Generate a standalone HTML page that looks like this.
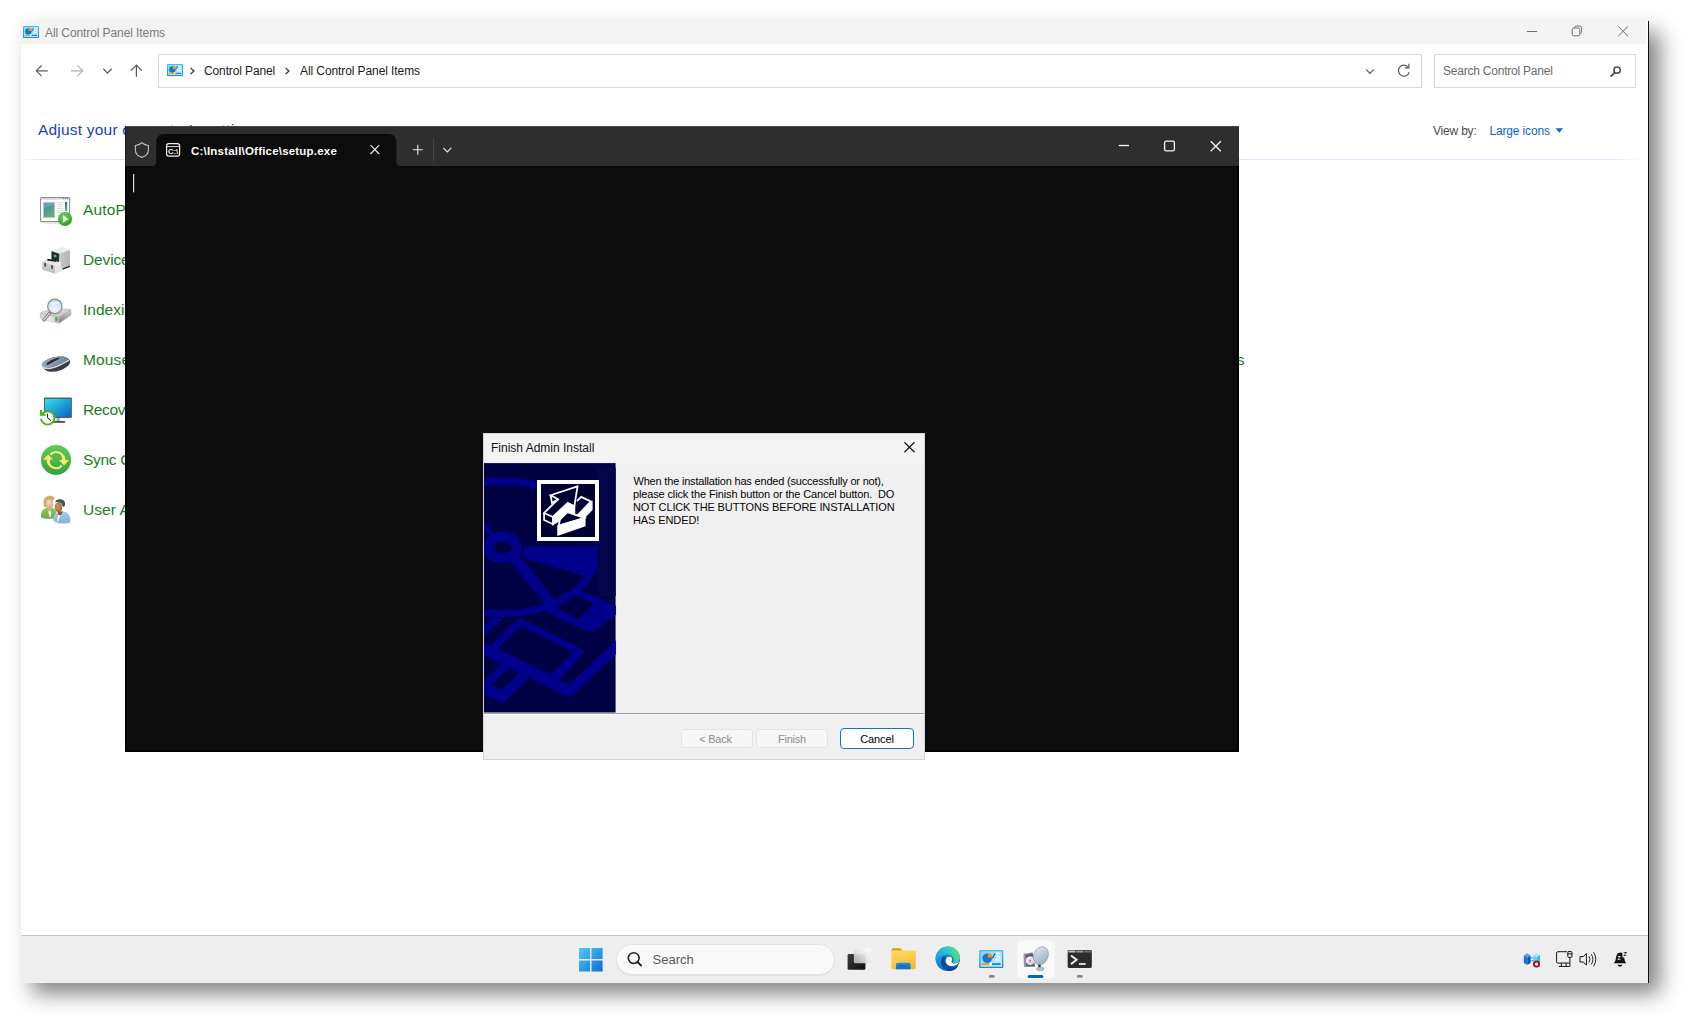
<!DOCTYPE html>
<html lang="en">
<head>
<meta charset="utf-8">
<title>All Control Panel Items</title>
<style>
*{box-sizing:border-box;margin:0;padding:0}
html,body{width:1691px;height:1025px;overflow:hidden;background:#fff}
body{position:relative;font-family:"Liberation Sans",sans-serif;color:#000}
.abs{position:absolute}
svg{position:absolute;overflow:visible}
.t{position:absolute;white-space:nowrap;line-height:1}
#win{position:absolute;left:21px;top:21px;width:1628px;height:962px;background:#fff;box-shadow:10.5px 11px 20px rgba(0,0,0,.48)}
#rline{position:absolute;left:1648px;top:21px;width:1px;height:962px;background:#111;z-index:50}
#cp-title{left:21px;top:21px;width:1625px;height:23px;background:#f3f3f3}
.box{position:absolute;border:1px solid #d9d9d9;background:#fff}
.cpi{color:#1b7d1b;font-size:15.5px;letter-spacing:-0.2px}
#term{left:125px;top:126px;width:1114px;height:626px;background:#0c0c0c;box-shadow:inset 2px 0 0 #000,inset -2px 0 0 #000,inset 0 -2px 0 #000}
#term-bar{left:0;top:0;width:1114px;height:40px;background:#2e2e2e;border-top:1px solid #454545}
#tab{left:32px;top:8px;width:240px;height:32px;background:#0c0c0c;border-radius:8px 8px 0 0}
#dlg{left:483px;top:433px;width:442px;height:327px;background:#f0f0f0;box-shadow:0 0 0 1px rgba(160,160,160,.0)}
#dlg-title{left:0;top:0;width:442px;height:30px;background:#f3f3f3}
.btn{position:absolute;height:19px;border:1px solid #e3e3e3;border-radius:3px;background:#f6f6f6;font-size:11px;text-align:center;line-height:19px;color:#8c8c8c}
#taskbar{left:21px;top:935px;width:1627px;height:48px;background:#eeeeee;border-top:1px solid #c4c4c4}
</style>
</head>
<body>
<div id="win"></div>
<div id="rline"></div>
<!-- ===== Control panel window chrome ===== -->
<div class="abs" id="cp-title"></div>
<svg style="left:23px;top:26px;width:16px;height:12px" viewBox="0 0 160 120">
  <defs><linearGradient id="cpf" x1="0" y1="0" x2="0" y2="1"><stop offset="0" stop-color="#3cc4f8"/><stop offset="1" stop-color="#1b86e4"/></linearGradient>
  <linearGradient id="cpi" x1="0" y1="0" x2="1" y2="1"><stop offset="0" stop-color="#8fd0f6"/><stop offset="1" stop-color="#cfeafb"/></linearGradient></defs>
  <rect x="0" y="0" width="160" height="120" rx="8" fill="url(#cpf)"/>
  <rect x="10" y="10" width="140" height="100" fill="url(#cpi)"/>
  <circle cx="53" cy="55" r="32" fill="#0b79da"/>
  <path d="M57,50 L57,18 A32,32 0 0 1 89,50 Z" fill="#ff9500"/>
  <path d="M86,52 C100,52 92,26 108,24" stroke="#0b4fa8" stroke-width="9" fill="none"/>
  <rect x="110" y="18" width="28" height="10" fill="#fff"/><rect x="114" y="40" width="26" height="10" fill="#fff"/><rect x="106" y="60" width="28" height="10" fill="#fff"/>
  <rect x="18" y="88" width="52" height="11" fill="#ff9500"/><rect x="70" y="86" width="14" height="15" fill="#fff"/><rect x="84" y="88" width="58" height="11" fill="#0b79da"/>
</svg>
<div class="t" style="left:45px;top:27px;font-size:12px;letter-spacing:-0.09px;color:#7b7b7b" id="cpt">All Control Panel Items</div>
<svg style="left:0;top:0;width:1691px;height:120px" viewBox="0 0 1691 120" fill="none" stroke-linecap="butt">
  <!-- caption buttons -->
  <path d="M1527,31.5 H1537" stroke="#6e6e6e" stroke-width="1"/>
  <path d="M1574.3,27.7 Q1574.6,26 1576.5,26 H1579.5 Q1581.6,26 1581.6,28.2 V31.2 Q1581.6,33 1580,33.4" stroke="#6e6e6e" stroke-width="1"/>
  <rect x="1572.2" y="28" width="7.6" height="7.8" rx="1.6" stroke="#6e6e6e" stroke-width="1"/>
  <path d="M1618.2,26.4 L1628,36.2 M1628,26.4 L1618.2,36.2" stroke="#6e6e6e" stroke-width="1"/>
  <!-- nav arrows -->
  <path d="M47.8,70.8 H36.6 M41.6,65.5 L36.3,70.8 L41.6,76.1" stroke="#606060" stroke-width="1.2"/>
  <path d="M71,70.8 H82.4 M77.4,65.4 L82.8,70.8 L77.4,76.2" stroke="#b2b2b2" stroke-width="1.2"/>
  <path d="M103.4,68.8 L107.5,73.1 L111.6,68.8" stroke="#5a5a5a" stroke-width="1.25"/>
  <path d="M136.4,76.8 V65.2 M130.9,70.6 L136.4,65 L141.9,70.6" stroke="#565656" stroke-width="1.2"/>
</svg>

<!-- address box -->
<div class="box" style="left:158px;top:54px;width:1264px;height:34px"></div>
<div class="box" style="left:1434px;top:54px;width:202px;height:34px"></div>
<svg style="left:167px;top:64px;width:16px;height:12px" viewBox="0 0 160 120">
  <rect x="0" y="0" width="160" height="120" rx="8" fill="url(#cpf)"/>
  <rect x="10" y="10" width="140" height="100" fill="url(#cpi)"/>
  <circle cx="53" cy="55" r="32" fill="#0b79da"/>
  <path d="M57,50 L57,18 A32,32 0 0 1 89,50 Z" fill="#ff9500"/>
  <path d="M86,52 C100,52 92,26 108,24" stroke="#0b4fa8" stroke-width="9" fill="none"/>
  <rect x="110" y="18" width="28" height="10" fill="#fff"/><rect x="114" y="40" width="26" height="10" fill="#fff"/><rect x="106" y="60" width="28" height="10" fill="#fff"/>
  <rect x="18" y="88" width="52" height="11" fill="#ff9500"/><rect x="70" y="86" width="14" height="15" fill="#fff"/><rect x="84" y="88" width="58" height="11" fill="#0b79da"/>
</svg>
<svg style="left:0;top:0;width:1691px;height:120px" viewBox="0 0 1691 120" fill="none">
  <path d="M190.6,67.9 L193.9,71 L190.6,74.1" stroke="#444" stroke-width="1.4"/>
  <path d="M285.6,67.9 L288.9,71 L285.6,74.1" stroke="#444" stroke-width="1.4"/>
  <path d="M1366.3,69.6 L1370,73.4 L1373.7,69.6" stroke="#5a5a5a" stroke-width="1.25"/>
  <path d="M1408.3,67.4 A5.5,5.5 0 1 0 1409.2,72.2" stroke="#5a5a5a" stroke-width="1.25"/>
  <path d="M1408.9,63.8 V67.9 H1404.8" stroke="#5a5a5a" stroke-width="1.25"/>
  <circle cx="1617.1" cy="70.1" r="3.2" stroke="#4a4a4a" stroke-width="1.5"/>
  <path d="M1614.8,72.5 L1610.6,76.7" stroke="#4a4a4a" stroke-width="1.8"/>
</svg>
<div class="t" id="bc1" style="left:204px;top:65px;font-size:12px;letter-spacing:-0.12px;color:#1a1a1a">Control Panel</div>
<div class="t" id="bc2" style="left:300px;top:65px;font-size:12px;letter-spacing:-0.09px;color:#1a1a1a">All Control Panel Items</div>
<div class="t" id="srch" style="left:1443px;top:65px;font-size:12px;letter-spacing:-0.22px;color:#6a6a6a">Search Control Panel</div>

<!-- heading -->
<div class="t" id="adj" style="left:38px;top:122px;font-size:15.5px;letter-spacing:0.2px;color:#1b3fb8">Adjust your computer’s settings</div>
<div class="t" id="vb" style="left:1433px;top:125px;font-size:12px;letter-spacing:-0.2px;color:#4a4a4a">View by:</div>
<div class="t" id="li" style="left:1489.4px;top:125px;font-size:12px;letter-spacing:-0.14px;color:#0a64d2">Large icons</div>
<svg style="left:1555px;top:128px;width:9px;height:6px" viewBox="0 0 9 6"><path d="M0.6,0.2 H8 L4.3,4.8 Z" fill="#0a64d2"/></svg>
<div class="abs" style="left:21px;top:159px;width:1620px;height:1px;background:linear-gradient(90deg,rgba(214,228,245,0),#d6e4f5 25px,#d6e4f5 1590px,rgba(214,228,245,0))"></div>

<!-- item labels -->
<div class="t cpi" style="left:83px;top:202px;letter-spacing:0.18px">AutoPlay</div>
<div class="t cpi" style="left:83px;top:252px;letter-spacing:-0.13px">Device Manager</div>
<div class="t cpi" style="left:83px;top:302px;letter-spacing:0px">Indexing Options</div>
<div class="t cpi" style="left:83px;top:352px;letter-spacing:0.13px">Mouse</div>
<div class="t cpi" style="left:83px;top:402px;letter-spacing:-0.35px">Recovery</div>
<div class="t cpi" style="left:83px;top:452px;letter-spacing:-0.29px">Sync Center</div>
<div class="t cpi" style="left:83px;top:502px;letter-spacing:0.05px">User Accounts</div>
<div class="t cpi" id="pf" style="right:446.7px;top:352px">Programs and Features</div>
<!-- ===== Control panel item icons ===== -->
<!-- AutoPlay -->
<svg style="left:34px;top:190px;width:48px;height:40px" viewBox="0 0 1230 1025">
  <defs>
    <linearGradient id="apg" x1="0" y1="0" x2="0.5" y2="1"><stop offset="0" stop-color="#4c7cb4"/><stop offset="0.45" stop-color="#4f9a98"/><stop offset="1" stop-color="#62b070"/></linearGradient>
    <linearGradient id="apb" x1="0" y1="0" x2="0" y2="1"><stop offset="0" stop-color="#2b5ea8"/><stop offset="1" stop-color="#5ab060"/></linearGradient>
    <radialGradient id="apc" cx="0.4" cy="0.3" r="0.8"><stop offset="0" stop-color="#6fd060"/><stop offset="1" stop-color="#1f9a18"/></radialGradient>
  </defs>
  <ellipse cx="560" cy="840" rx="400" ry="22" fill="#000" opacity=".12"/>
  <rect x="168" y="192" width="745" height="618" rx="30" fill="#fff" stroke="#8c8c8c" stroke-width="26"/>
  <rect x="182" y="206" width="717" height="42" fill="#d3d7dc"/>
  <rect x="745" y="206" width="28" height="24" fill="#5a7fb0"/><rect x="795" y="206" width="28" height="24" fill="#5a7fb0"/><rect x="845" y="206" width="28" height="24" fill="#5a7fb0"/>
  <rect x="240" y="315" width="292" height="392" fill="url(#apg)" stroke="#c9c3dc" stroke-width="22"/>
  <path d="M260,470 Q360,400 520,390 L520,330 L260,330 Z" fill="#fff" opacity=".18"/>
  <g stroke="#cfcfcf" stroke-width="20"><path d="M595,320H740M595,371H740M595,422H740M595,473H740M595,524H740M595,575H740M595,655H660"/></g>
  <rect x="795" y="305" width="55" height="230" fill="url(#apb)"/>
  <circle cx="795" cy="742" r="180" fill="url(#apc)"/>
  <path d="M742,648 L742,838 L888,742 Z" fill="#fff"/>
</svg>
<!-- Device Manager -->
<svg style="left:34px;top:240px;width:48px;height:40px" viewBox="0 0 1230 1025">
  <defs>
    <linearGradient id="dm1" x1="0" y1="0" x2="1" y2="0"><stop offset="0" stop-color="#c9c9c9"/><stop offset="1" stop-color="#b3b3b3"/></linearGradient>
    <linearGradient id="dm2" x1="0" y1="0" x2="0" y2="1"><stop offset="0" stop-color="#d6d6d6"/><stop offset="1" stop-color="#bababa"/></linearGradient>
  </defs>
  <path d="M730,715 L918,645 L918,692 L730,765 Z" fill="#1c1c1c"/>
  <path d="M445,285 L700,182 L920,250 L650,350 Z" fill="#ececec"/>
  <path d="M650,350 L920,250 L920,655 L690,745 Z" fill="url(#dm1)"/>
  <path d="M445,285 L650,350 L645,570 L445,505 Z" fill="#3a3a3c"/>
  <path d="M470,320 L625,368 L620,540 L470,490 Z" fill="#262628"/>
  <rect x="508" y="375" width="64" height="66" rx="8" fill="#22e030"/>
  <path d="M210,545 L345,480 L665,590 L545,665 Z" fill="#e6e6e6"/>
  <path d="M340,490 C420,470 470,520 560,520 L575,555 C480,560 430,520 350,535 Z" fill="#111"/>
  <path d="M210,545 L545,665 L545,865 L210,765 Z" fill="url(#dm2)"/>
  <path d="M545,665 L690,590 L715,790 L545,865 Z" fill="#e4e4e4"/>
  <ellipse cx="287" cy="632" rx="30" ry="58" fill="#5a5a5a"/>
  <ellipse cx="462" cy="692" rx="30" ry="55" fill="#5a5a5a"/>
</svg>
<!-- Indexing Options -->
<svg style="left:34px;top:290px;width:48px;height:40px" viewBox="0 0 1230 1025">
  <defs>
    <linearGradient id="ix1" x1="0" y1="0" x2="1" y2="1"><stop offset="0" stop-color="#e4e4e4"/><stop offset="1" stop-color="#bdbdbd"/></linearGradient>
    <linearGradient id="ix2" x1="0" y1="0" x2="1" y2="0"><stop offset="0" stop-color="#d2d2d2"/><stop offset="0.5" stop-color="#ececec"/><stop offset="1" stop-color="#c2c2c2"/></linearGradient>
    <linearGradient id="ix3" x1="0" y1="0" x2="0" y2="1"><stop offset="0" stop-color="#cfcfcf"/><stop offset="1" stop-color="#7c7c7c"/></linearGradient>
    <radialGradient id="ixg" cx="0.45" cy="0.7" r="0.75"><stop offset="0" stop-color="#f4f9ff"/><stop offset="1" stop-color="#b5d5f7"/></radialGradient>
  </defs>
  <path d="M165,600 Q160,585 185,572 L470,480 L900,492 Q945,495 945,520 L645,700 Z" fill="url(#ix1)" stroke="#a2a2a2" stroke-width="12"/>
  <path d="M165,600 L645,700 L640,850 Q400,800 200,745 Q160,730 160,690 Z" fill="url(#ix2)" stroke="#a8a8a8" stroke-width="12"/>
  <path d="M645,700 L945,520 L950,620 Q950,640 930,655 L640,850 Z" fill="url(#ix3)" stroke="#8e8e8e" stroke-width="10"/>
  <rect x="540" y="700" width="62" height="100" rx="10" fill="#3cc800" stroke="#7a5a9a" stroke-width="8" stroke-opacity=".5"/>
  <path d="M405,590 L250,772" stroke="#7e7e7e" stroke-width="82" stroke-linecap="round"/>
  <path d="M398,598 L247,770" stroke="#dcdcdc" stroke-width="34" stroke-linecap="round"/>
  <circle cx="535" cy="420" r="185" fill="url(#ixg)" stroke="#8b8b8b" stroke-width="30"/>
  <path d="M455,330 Q540,280 630,310 L640,360 Q540,340 470,390 Z" fill="#fff" opacity=".6"/>
</svg>
<!-- Mouse -->
<svg style="left:34px;top:340px;width:48px;height:40px" viewBox="0 0 1230 1025">
  <defs>
    <linearGradient id="ms1" x1="0" y1="0" x2="1" y2="0.3"><stop offset="0" stop-color="#9fb0c8"/><stop offset="1" stop-color="#72869f"/></linearGradient>
  </defs>
  <path d="M205,640 C190,560 420,440 640,425 C800,415 915,470 925,560 C930,640 800,740 640,790 C500,830 330,820 260,740 Z" fill="#383d46"/>
  <path d="M205,630 C200,560 420,440 640,425 C760,418 850,450 880,500 C760,560 560,690 330,715 C260,715 210,680 205,630 Z" fill="url(#ms1)"/>
  <path d="M215,690 C300,760 480,720 620,660 C740,605 840,545 895,515" stroke="#d4d8dc" stroke-width="38" fill="none"/>
  <path d="M320,610 C340,560 480,490 620,455 C650,450 660,470 640,490 C540,540 440,600 360,635 C330,645 315,630 320,610 Z" fill="#2c2c2e"/>
  <ellipse cx="640" cy="447" rx="28" ry="16" fill="#25c93a"/>
</svg>
<!-- Recovery -->
<svg style="left:34px;top:390px;width:48px;height:40px" viewBox="0 0 1230 1025">
  <defs>
    <linearGradient id="rc1" x1="0" y1="0" x2="1" y2="1"><stop offset="0" stop-color="#34e0ec"/><stop offset="0.5" stop-color="#1ea0d8"/><stop offset="1" stop-color="#0a62c6"/></linearGradient>
  </defs>
  <rect x="578" y="700" width="84" height="100" fill="#a4acb6"/>
  <rect x="470" y="793" width="326" height="44" rx="8" fill="#454545"/>
  <rect x="255" y="195" width="716" height="522" rx="26" fill="#5a5a5e"/>
  <rect x="280" y="228" width="668" height="466" fill="url(#rc1)"/>
  <circle cx="350" cy="715" r="160" fill="#fbfbfb"/>
  <circle cx="350" cy="715" r="172" fill="none" stroke="#4db818" stroke-width="50"/>
  <rect x="120" y="655" width="90" height="82" fill="#fff"/>
  <rect x="150" y="660" width="40" height="72" fill="#fbfbfb"/>
  <path d="M152,512 L205,512 L205,555 L300,630 L300,662 L152,662 Z" fill="#4db818"/>
  <path d="M345,600 L345,705 L432,785" fill="none" stroke="#303034" stroke-width="26"/>
</svg>
<!-- Sync Center -->
<svg style="left:34px;top:440px;width:48px;height:40px" viewBox="0 0 1230 1025">
  <defs>
    <linearGradient id="sy1" x1="0" y1="0" x2="0" y2="1"><stop offset="0" stop-color="#62c95e"/><stop offset="1" stop-color="#36a23a"/></linearGradient>
    <linearGradient id="sy2" x1="0" y1="0" x2="1" y2="0"><stop offset="0" stop-color="#d6f59c"/><stop offset="0.6" stop-color="#ffe66a"/></linearGradient>
    <linearGradient id="sy3" x1="1" y1="0" x2="0" y2="0"><stop offset="0" stop-color="#d6f59c"/><stop offset="0.6" stop-color="#ffe66a"/></linearGradient>
  </defs>
  <circle cx="565" cy="510" r="385" fill="url(#sy1)"/>
  <path d="M400,345 A245,245 0 0 1 808,515 L895,515 L770,652 L640,515 L718,515 A155,155 0 0 0 440,400 Z" fill="url(#sy2)"/>
  <path d="M735,680 A245,245 0 0 1 322,500 L235,500 L362,372 L490,500 L412,500 A155,155 0 0 0 690,625 Z" fill="url(#sy3)"/>
</svg>
<!-- User Accounts -->
<svg style="left:34px;top:490px;width:48px;height:40px" viewBox="0 0 1230 1025">
  <defs>
    <radialGradient id="ua1" cx="0.4" cy="0.35" r="0.7"><stop offset="0" stop-color="#f6d8bf"/><stop offset="1" stop-color="#d9a783"/></radialGradient>
    <radialGradient id="ua2" cx="0.4" cy="0.4" r="0.7"><stop offset="0" stop-color="#c9976a"/><stop offset="1" stop-color="#9b6234"/></radialGradient>
    <linearGradient id="ua3" x1="0" y1="0" x2="0" y2="1"><stop offset="0" stop-color="#8fc463"/><stop offset="1" stop-color="#6ea84a"/></linearGradient>
    <linearGradient id="ua4" x1="0" y1="0" x2="0" y2="1"><stop offset="0" stop-color="#a9cdf0"/><stop offset="1" stop-color="#7fb0e2"/></linearGradient>
  </defs>
  <ellipse cx="370" cy="725" rx="200" ry="18" fill="#000" opacity=".12"/>
  <path d="M180,705 C170,560 215,490 330,455 L470,455 C560,485 585,560 580,720 C460,745 290,745 180,705 Z" fill="url(#ua3)"/>
  <path d="M360,545 L445,545 L425,705 L405,705 Z" fill="#eef6f2"/>
  <path d="M245,330 C235,200 330,140 420,150 C500,160 540,185 520,225 L480,280 L490,430 L285,450 C255,420 250,380 245,330 Z" fill="#c9b06c"/>
  <ellipse cx="398" cy="345" rx="92" ry="128" fill="url(#ua1)"/>
  <path d="M270,300 C290,200 400,175 515,215 C470,225 420,250 330,250 C300,270 290,330 285,420 C265,380 262,340 270,300 Z" fill="#c8ae66"/>
  <rect x="355" y="440" width="80" height="90" fill="#dcae8c"/>
  <ellipse cx="720" cy="845" rx="215" ry="18" fill="#000" opacity=".12"/>
  <path d="M500,790 C490,650 540,590 640,565 L790,555 C900,590 940,680 930,830 C800,870 610,865 500,790 Z" fill="url(#ua4)"/>
  <path d="M610,560 L745,545 L690,640 L620,640 Z" fill="#8e5428"/>
  <path d="M615,640 L680,640 L612,815 L590,800 Z" fill="#f1f5fa"/>
  <path d="M545,300 C590,215 760,215 795,330 C800,400 780,420 745,430 L700,330 Z" fill="#4e4e50"/>
  <ellipse cx="628" cy="440" rx="96" ry="132" fill="url(#ua2)"/>
  <path d="M540,320 C580,290 660,290 720,330 L745,430 C780,400 800,370 790,320 C750,215 600,215 540,320 Z" fill="#505052"/>
</svg>
<!-- ===== Terminal window ===== -->
<div class="abs" id="term">
  <div class="abs" id="term-bar"></div>
  <div class="abs" style="left:0;top:0;width:1px;height:40px;background:#1b1b1b"></div>
</div>
<svg style="left:0;top:100px;width:1691px;height:120px" viewBox="0 100 1691 120" fill="none">
  <!-- tab shape -->
  <path d="M152,166 Q156.3,166 156.3,161.5 V142 Q156.3,134 164.3,134 H388.3 Q396.3,134 396.3,142 V161.5 Q396.3,166 400.6,166 Z" fill="#0c0c0c"/>
  <!-- shield -->
  <path d="M141.9,142.8 C144,144.6 146.2,145.3 148.4,145.5 V150.2 C148.4,153.6 145.8,156 141.9,157.4 C138,156 135.4,153.6 135.4,150.2 V145.5 C137.6,145.3 139.8,144.6 141.9,142.8 Z" stroke="#bdbdbd" stroke-width="1.15"/>
  <!-- cmd icon -->
  <rect x="166.6" y="143.6" width="13" height="12.6" rx="2.2" stroke="#f2f2f2" stroke-width="1.2"/>
  <path d="M166.6,146.6 H179.6" stroke="#f2f2f2" stroke-width="0.9"/>
  <text x="167.9" y="154.1" font-family="Liberation Sans, sans-serif" font-size="7.4" font-weight="bold" fill="#f2f2f2" textLength="10.3" lengthAdjust="spacingAndGlyphs">C:\</text>
  <!-- tab close -->
  <path d="M370.5,145.2 L379.2,154 M379.2,145.2 L370.5,154" stroke="#ededed" stroke-width="1.15"/>
  <!-- plus, sep, chevron -->
  <path d="M412.8,149.7 H422.8 M417.8,144.7 V154.7" stroke="#e6e6e6" stroke-width="1.1"/>
  <path d="M433.6,138 V161.5" stroke="#474747" stroke-width="1"/>
  <path d="M443.3,147.9 L447.3,152 L451.3,147.9" stroke="#e6e6e6" stroke-width="1.15"/>
  <!-- window buttons -->
  <path d="M1118.8,145.5 H1129" stroke="#f4f4f4" stroke-width="1.3"/>
  <rect x="1164.6" y="141.2" width="9.8" height="9.6" rx="1.6" stroke="#f4f4f4" stroke-width="1.3"/>
  <path d="M1210.7,141.2 L1220.8,151.2 M1220.8,141.2 L1210.7,151.2" stroke="#f4f4f4" stroke-width="1.3"/>
  <!-- cursor -->
  <rect x="133" y="174" width="1.2" height="18.4" fill="#dcdcdc"/>
</svg>
<div class="t" id="tabt" style="left:191px;top:146px;font-size:11.5px;font-weight:bold;letter-spacing:0.2px;color:#fbfbfb">C:\Install\Office\setup.exe</div>
<!-- ===== Dialog ===== -->
<div class="abs" id="dlg">
  <div class="abs" id="dlg-title"></div>
  <div class="abs" style="left:0;top:0;width:442px;height:327px;border:1px solid rgba(120,120,120,.22)"></div>
</div>
<div class="t" id="dt" style="left:491px;top:442px;font-size:12px;color:#111">Finish Admin Install</div>
<svg style="left:900px;top:438px;width:20px;height:20px" viewBox="900 438 20 20" fill="none"><path d="M904.4,442.3 L914.5,452.3 M914.5,442.3 L904.4,452.3" stroke="#1a1a1a" stroke-width="1.2"/></svg>

<!-- left bitmap -->
<svg style="left:480px;top:460px;width:140px;height:256px" viewBox="0 0 561 1025">
  <defs><clipPath id="bmc"><rect x="16" y="12" width="528" height="1000"/></clipPath></defs>
  <g clip-path="url(#bmc)">
    <rect x="16" y="12" width="528" height="1000" fill="#000045"/>
    <ellipse cx="90" cy="350" rx="385" ry="265" fill="none" stroke="#00008a" stroke-width="27"/>
    <rect x="470" y="30" width="75" height="515" fill="#04044b"/>
    <path d="M170,345 L472,345 L464,400 L420,464 L176,393 Z" fill="#00008a"/>
    <path d="M138,390 L292,586" stroke="#00008a" stroke-width="42"/>
    <path d="M10,258 L52,302" stroke="#00008a" stroke-width="22"/>
    <ellipse cx="90" cy="350" rx="78" ry="63" fill="#00008a"/>
    <ellipse cx="90" cy="350" rx="36" ry="24" fill="#000045"/>
  </g>
</svg>
<svg style="left:480px;top:580px;width:140px;height:136px" viewBox="0 0 1055 1025">
  <defs><clipPath id="bmc2"><rect x="30" y="0" width="994" height="1002"/></clipPath></defs>
  <g clip-path="url(#bmc2)" fill="#00008a" fill-rule="evenodd">
    <path d="M715,60 L1024,195 L1024,262 L850,392 L800,385 L480,235 L560,150 Z M570,207 L715,112 L855,182 L745,293 Z"/>
    <path d="M300,285 L770,522 Q790,540 775,560 L600,745 L535,790 L80,560 L80,490 Z M305,345 L705,545 L530,715 L135,515 Z"/>
    <path d="M25,470 L135,515 L530,715 L600,745 L670,790 L1024,455 L1024,560 L690,882 L640,870 L370,735 L160,635 L25,565 Z"/>
    <path d="M160,635 L370,735 L175,928 L130,915 L25,865 L25,765 Z M215,660 L300,695 L165,830 L85,795 Z"/>
    <path d="M25,345 L90,285 L175,290 L25,425 Z"/>
  </g>
</svg>
<!-- icon frame -->
<div class="abs" style="left:537px;top:480px;width:61.6px;height:61px;background:#000034;border:4px solid #fff"></div>
<svg style="left:532px;top:475px;width:72px;height:72px" viewBox="0 0 1025 1025" fill="none" stroke="#fff" stroke-width="25" stroke-linejoin="miter">
  <path d="M265,288 L648,162 L603,447 L508,400 L300,597 L172,540 L372,345 Z"/>
  <path d="M265,288 L285,400 L372,345"/>
  <path d="M172,540 L172,640 L300,700 L300,597"/>
  <path d="M300,597 L508,400 L603,447 L603,545 L510,520 L385,650 L300,700 Z" fill="#fff"/>
  <path d="M640,372 L700,312 L850,382"/>
  <path d="M820,395 L850,382 L850,492 L742,606 L655,568 Z" fill="#fff"/>
  <path d="M400,615 L505,528 L745,612 L380,725 Z"/>
  <path d="M372,725 L750,612 L750,722 L372,850 Z" fill="#fff"/>
</svg>

<div class="t" id="m1" style="left:633.5px;top:475px;font-size:11px;letter-spacing:-0.19px;color:#050505;line-height:13px">When the installation has ended (successfully or not),</div>
<div class="t" id="m2" style="left:633px;top:488px;font-size:11px;letter-spacing:-0.14px;color:#050505;line-height:13px">please click the Finish button or the Cancel button.&nbsp; DO</div>
<div class="t" id="m3" style="left:633px;top:501px;font-size:11px;letter-spacing:-0.127px;color:#050505;line-height:13px">NOT CLICK THE BUTTONS BEFORE INSTALLATION</div>
<div class="t" id="m4" style="left:633px;top:514px;font-size:11px;letter-spacing:-0.1px;color:#050505;line-height:13px">HAS ENDED!</div>

<div class="abs" style="left:484px;top:713px;width:440px;height:1px;background:#a0a0a0"></div>
<div class="abs" style="left:484px;top:714px;width:440px;height:1px;background:#fbfbfb"></div>
<div class="btn" id="b1" style="letter-spacing:-0.2px;padding-right:3px;left:681px;top:729px;width:72px">&lt; Back</div>
<div class="btn" id="b2" style="letter-spacing:-0.25px;left:756px;top:729px;width:72px">Finish</div>
<div class="btn" id="b3" style="letter-spacing:-0.15px;left:840px;top:728px;width:74px;height:21px;line-height:20px;border:1.5px solid #1571c6;border-radius:4px;background:#fdfdfd;color:#000">Cancel</div>
<!-- ===== Taskbar ===== -->
<div class="abs" id="taskbar"></div>
<svg style="left:579px;top:947.6px;width:23.6px;height:23.4px" viewBox="0 0 236 234">
  <defs><linearGradient id="wl" x1="0" y1="0" x2="1" y2="1"><stop offset="0" stop-color="#55c8f6"/><stop offset="1" stop-color="#0a6fd0"/></linearGradient></defs>
  <path d="M0,0 H111 V110 H0 Z M125,0 H236 V110 H125 Z M0,124 H111 V234 H0 Z M125,124 H236 V234 H125 Z" fill="url(#wl)"/>
</svg>
<div class="abs" style="left:616px;top:943.5px;width:219px;height:31px;border-radius:16px;background:#f9f9f9;border:1px solid #e2e2e2;box-shadow:0 1px 0 rgba(0,0,0,.05)"></div>
<svg style="left:620px;top:945px;width:30px;height:30px" viewBox="620 945 30 30" fill="none"><circle cx="633.7" cy="958.1" r="5.4" stroke="#1f1f1f" stroke-width="1.6"/><path d="M637.6,962 L641.2,965.6" stroke="#1f1f1f" stroke-width="1.9" stroke-linecap="round"/></svg>
<div class="t" id="ts" style="left:652.5px;top:952.5px;font-size:13px;color:#5a5a5a">Search</div>

<svg style="left:836px;top:936px;width:140px;height:48px" viewBox="0 0 1691 580">
  <defs>
    <linearGradient id="tv1" x1="0" y1="0" x2="1" y2="1"><stop offset="0" stop-color="#3c3c3c"/><stop offset="1" stop-color="#0e0e0e"/></linearGradient>
    <linearGradient id="tv2" x1="0" y1="1" x2="1" y2="0"><stop offset="0" stop-color="#b2b2b2"/><stop offset="0.5" stop-color="#e6e6e6"/><stop offset="1" stop-color="#ffffff"/></linearGradient>
    <linearGradient id="fe1" x1="0" y1="0" x2="0.4" y2="1"><stop offset="0" stop-color="#ffdd6e"/><stop offset="1" stop-color="#f8ba32"/></linearGradient>
    <linearGradient id="fe2" x1="0" y1="0" x2="0" y2="1"><stop offset="0" stop-color="#1a90e2"/><stop offset="1" stop-color="#0f6fc6"/></linearGradient>
    <linearGradient id="ed1" x1="0.1" y1="0.3" x2="0.9" y2="0.9"><stop offset="0" stop-color="#1f9be6"/><stop offset="1" stop-color="#0d55a8"/></linearGradient>
    <linearGradient id="ed2" x1="0" y1="0.6" x2="1" y2="0.2"><stop offset="0" stop-color="#1f9fe8"/><stop offset="0.5" stop-color="#2cc4cf"/><stop offset="1" stop-color="#66e65a"/></linearGradient>
  </defs>
  <!-- task view -->
  <rect x="140" y="218" width="215" height="190" rx="16" fill="url(#tv1)"/>
  <rect x="215" y="148" width="210" height="180" rx="14" fill="url(#tv2)" opacity=".93"/>
  <!-- explorer -->
  <path d="M670,168 Q670,148 690,148 L765,148 Q780,148 790,160 L805,180 L670,215 Z" fill="#e0a00e"/>
  <rect x="668" y="176" width="295" height="226" rx="14" fill="url(#fe1)"/>
  <path d="M724,402 V346 Q724,322 748,322 H878 Q902,322 902,346 V402 Z" fill="url(#fe2)"/>
  <rect x="765" y="357" width="96" height="12" rx="6" fill="#0d5cae"/>
  <!-- edge -->
  <circle cx="1350" cy="276" r="148" fill="url(#ed1)"/>
  <path d="M1203,295 C1195,190 1275,128 1352,128 C1440,128 1500,195 1497,262 C1495,310 1455,340 1405,335 C1440,300 1420,225 1345,225 C1270,225 1225,265 1203,295 Z" fill="url(#ed2)"/>
  <path d="M1290,250 C1240,330 1290,420 1370,422 C1425,422 1462,392 1478,352 C1440,385 1350,395 1322,320 C1312,290 1320,262 1340,250 Z" fill="#0c4a9c"/>
  <path d="M1328,318 C1318,284 1336,252 1366,250 C1396,249 1414,276 1397,300 C1387,315 1399,333 1428,335 C1454,336 1474,324 1486,306 C1480,344 1446,364 1400,364 C1362,364 1336,346 1328,318 Z" fill="#fdfdfd"/>
</svg>

<div class="abs" style="left:1016.5px;top:939.5px;width:38.5px;height:39px;border-radius:5px;background:#f8f8f8;border:1px solid #f5f5f5"></div>
<svg style="left:979.4px;top:950.1px;width:24.5px;height:18.1px" viewBox="0 0 160 120">
  <rect x="0" y="0" width="160" height="120" rx="8" fill="url(#cpf)"/>
  <rect x="9" y="9" width="142" height="102" fill="url(#cpi)"/>
  <circle cx="53" cy="55" r="32" fill="#0b79da"/>
  <path d="M57,50 L57,18 A32,32 0 0 1 89,50 Z" fill="#ff9500"/>
  <path d="M86,52 C100,52 92,26 108,24" stroke="#0b4fa8" stroke-width="8" fill="none"/>
  <rect x="110" y="18" width="28" height="10" fill="#fff"/><rect x="114" y="40" width="26" height="10" fill="#fff"/><rect x="106" y="60" width="28" height="10" fill="#fff"/>
  <rect x="18" y="88" width="52" height="11" fill="#ff9500"/><rect x="70" y="86" width="14" height="15" fill="#fff"/><rect x="84" y="88" width="58" height="11" fill="#0b79da"/>
</svg>
<svg style="left:966px;top:936px;width:140px;height:48px" viewBox="0 0 1691 580">
  <defs>
    <linearGradient id="in1" x1="0" y1="0" x2="1" y2="1"><stop offset="0" stop-color="#e4eef4"/><stop offset="1" stop-color="#8fa6b6"/></linearGradient>
    <linearGradient id="in2" x1="0" y1="0" x2="1" y2="0"><stop offset="0" stop-color="#9a96a8"/><stop offset="1" stop-color="#6e6c7c"/></linearGradient>
    <linearGradient id="in3" x1="0" y1="0" x2="1" y2="1"><stop offset="0" stop-color="#ffffff"/><stop offset="0.5" stop-color="#e8d4ec"/><stop offset="1" stop-color="#cfe6d8"/></linearGradient>
  </defs>
  <!-- indicators -->
  <rect x="274" y="472" width="72" height="33" rx="16" fill="#8a8a8a"/>
  <rect x="745" y="470" width="190" height="38" rx="19" fill="#0067c0"/>
  <rect x="1338" y="472" width="72" height="33" rx="16" fill="#8a8a8a"/>
  <!-- installer icon -->
  <path d="M695,215 L805,198 L835,372 L700,374 Z" fill="url(#in2)"/>
  <path d="M722,232 L800,222 L822,355 L730,358 Z" fill="#55525f"/>
  <circle cx="775" cy="298" r="52" fill="url(#in3)"/>
  <circle cx="775" cy="298" r="12" fill="#8d8a99"/>
  <path d="M872,285 L892,385" stroke="#2e3238" stroke-width="30"/>
  <ellipse cx="897" cy="398" rx="46" ry="22" fill="#a9c2cf" stroke="#7b93a0" stroke-width="6"/>
  <ellipse cx="905" cy="238" rx="86" ry="112" transform="rotate(22 905 238)" fill="url(#in1)" stroke="#7d8f9c" stroke-width="7"/>
  <!-- terminal icon -->
  <rect x="1228" y="170" width="292" height="216" rx="16" fill="#2c2c2c"/>
  <path d="M1236,186 Q1236,176 1246,176 H1320 V200 H1236 Z" fill="#c2c2c2"/>
  <rect x="1330" y="176" width="86" height="24" fill="#9a9a9a"/>
  <path d="M1426,176 H1502 Q1512,176 1512,186 V200 H1426 Z" fill="#6c6c6c"/>
  <path d="M1268,236 L1336,288 L1268,340" stroke="#ededed" stroke-width="24" fill="none"/>
  <rect x="1364" y="328" width="82" height="20" fill="#f4f4f4"/>
</svg>

<!-- tray -->
<svg style="left:1510px;top:940px;width:130px;height:40px" viewBox="0 0 1691 520" fill="none">
  <path d="M180,200 L225,172 L268,200 L225,226 Z" fill="#4aa4f4"/>
  <path d="M180,200 L225,226 L225,326 L180,296 Z" fill="#1670dc"/>
  <path d="M225,226 L268,200 L268,300 L225,326 Z" fill="#0b55b8"/>
  <path d="M305,196 L348,170 L392,196 L348,222 Z" fill="#a4eefc"/>
  <path d="M305,196 L348,222 L348,315 L305,290 Z" fill="#58d8f8"/>
  <path d="M348,222 L392,196 L392,290 L348,315 Z" fill="#3bbcec"/>
  <path d="M268,232 H305 M268,268 H305" stroke="#3a8fe6" stroke-width="13"/>
  <circle cx="345" cy="313" r="34" fill="#fff" stroke="#b10c0c" stroke-width="24"/>
  <g stroke="#141414" stroke-width="13" stroke-linecap="round" stroke-linejoin="round">
    <path d="M738,152 H622 Q606,152 606,168 V284 Q606,300 622,300 H772"/>
    <path d="M668,302 V340 M730,302 V340 M640,344 H765"/>
    <rect x="752" y="150" width="54" height="76" rx="13"/>
    <path d="M754,180 H804 M779,228 V346"/>
    <path d="M916,216 H952 L994,176 V326 L952,286 H916 Z"/>
    <path d="M1030,214 Q1052,251 1030,288" stroke-width="12"/>
    <path d="M1060,188 Q1100,251 1060,314" stroke-width="12"/>
    <path d="M1090,163 Q1146,251 1090,338" stroke-width="12"/>
  </g>
  <path d="M1348,302 C1384,274 1372,222 1390,192 C1406,164 1440,156 1466,170 C1492,186 1484,230 1490,256 C1494,276 1504,292 1514,302 Z" fill="#141414"/>
  <path d="M1398,322 H1462 Q1452,348 1430,348 Q1408,348 1398,322 Z" fill="#141414"/>
  <rect x="1462" y="140" width="72" height="86" fill="#eeeeee"/>
  <text x="1399" y="262" font-family="Liberation Sans, sans-serif" font-size="66" font-weight="bold" fill="#f4f4f4">Z</text>
  <text x="1472" y="214" font-family="Liberation Sans, sans-serif" font-size="80" font-weight="bold" fill="#141414">Z</text>
</svg>
</body></html>
